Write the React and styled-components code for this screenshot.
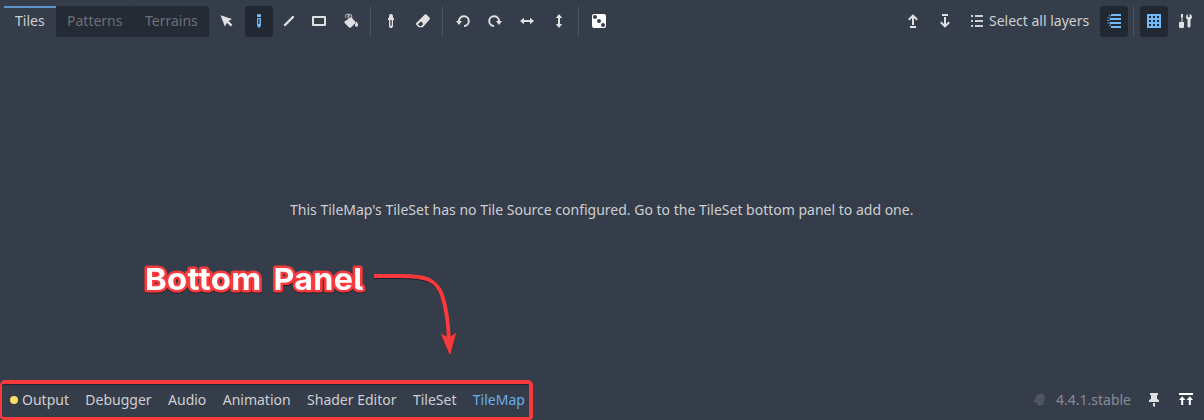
import React from "react";
import styled, { createGlobalStyle } from "styled-components";

const Global = createGlobalStyle`
  * { box-sizing: border-box; }
  body { margin: 0; background: #363d4a; }
`;

const Panel = styled.div`
  position: relative;
  display: flex;
  flex-direction: column;
  width: 1204px;
  height: 420px;
  overflow: hidden;
  background: #363d4a;
  color: #cdcfd2;
  font: 14px/20px "Noto Sans", sans-serif;
`;

const Toolbar = styled.header`
  display: flex;
  height: 31px;
  margin-top: 6px;
  padding: 0 4px;
`;

const Tabs = styled.nav`
  display: flex;
  width: 205px;
  margin-right: 4px;
`;

const Tab = styled.div`
  width: ${(p) => p.$width}px;
  padding: ${(p) => (p.$active ? 3 : 5)}px 0 0 11px;
  border-top: ${(p) => (p.$active ? "2px solid #5c92c9" : "0")};
  background: ${(p) => (p.$active ? "transparent" : "#252b34")};
  color: ${(p) => (p.$active ? "#cdcfd2" : "#6c7078")};
  border-radius: ${(p) => (p.$active ? "0" : "1px 2px 0 0")};
`;

const Group = styled.div`
  display: flex;
`;

const ToolButton = styled.button`
  display: flex;
  align-items: center;
  justify-content: center;
  width: 28px;
  height: 31px;
  margin-right: ${(p) => p.$gap ?? 4}px;
  padding: 0 0 1px;
  border: 0;
  border-radius: 3px;
  background: ${(p) => (p.$pressed ? "#222831" : "transparent")};
  color: ${(p) => (p.$pressed ? "#70bafa" : "#e0e0e0")};
`;

const Separator = styled.div`
  width: 1px;
  height: 31px;
  margin-right: 6px;
  background: #4a505c;
`;

const Spacer = styled.div`
  flex: 1;
`;

const LayerButton = styled.div`
  display: flex;
  align-items: center;
  gap: 4px;
  width: 131px;
  height: 30px;
  white-space: nowrap;
`;

const Message = styled.main`
  flex: 1;
  padding: 163px 0 0 290px;
  white-space: nowrap;
`;

const BottomBar = styled.footer`
  display: flex;
  align-items: center;
  height: 40px;
`;

const PanelTabs = styled.nav`
  display: flex;
  align-items: center;
  gap: 16.4px;
  width: 533px;
  height: 40px;
  padding: 0 0 2px 8px;
  border: 4px solid #f93a3c;
  border-left-width: 2px;
  border-bottom-width: 3px;
  border-radius: 5px 5px 4px 4px;
  box-shadow: inset 0 1px 1px #20242d;
`;

const PanelTab = styled.div`
  display: flex;
  align-items: center;
  gap: 4px;
  white-space: nowrap;
  color: ${(p) => (p.$active ? "#69aeed" : "#cdcfd2")};
`;

const Dot = styled.i`
  width: 8px;
  height: 8px;
  border-radius: 50%;
  background: #ffdd65;
`;

const Status = styled.div`
  display: flex;
  align-items: center;
  padding-right: 10px;
  color: #888c94;
`;

const Version = styled.span`
  width: 80px;
  margin: 0 10px 0 9px;
`;

const BarIcon = styled.span`
  display: flex;
  color: #e0e0e0;
  margin-right: ${(p) => p.$gap || 0}px;
`;

const Annotation = styled.svg`
  position: absolute;
  left: 130px;
  top: 250px;
  filter: drop-shadow(0 1px 0.5px #20242d);
`;

const CalloutText = styled.text`
  fill: #fff;
  stroke: #f93a3c;
  stroke-width: 5px;
  stroke-linejoin: round;
  paint-order: stroke fill;
  font: 700 30px Inter, sans-serif;
  font-feature-settings: "cv05" 1;
  letter-spacing: 0.3px;
`;

const shapes = {
  select: <path d="M1.5 2.2l4.4 11.2 2.1-3.6 3.7 3.6 1.7-1.6-3.8-3.7 3.4-2z" />,
  pencil: (
    <path fillRule="evenodd" d="M6 2a1 1 0 0 1 1-1h2a1 1 0 0 1 1 1v2H6zM6 5h4v7l-1 2.6H7L6 12zm1.2 1v5h1.3V6z" />
  ),
  line: <path d="M4 12l8-8" stroke="currentColor" strokeWidth="2.4" strokeLinecap="round" fill="none" />,
  rect: <path d="M2 4h12v8H2z" stroke="currentColor" strokeWidth="2" strokeLinejoin="round" fill="none" />,
  bucket: (
    <>
      <path d="M8 4L13 9.4 7.9 14.4Q7 15.2 6.1 14.4L1.6 10Q.9 9.2 1.6 8.4z" />
      <path d="M2.6 5V3a1.6 1.6 0 0 1 3.2-.4V6" stroke="currentColor" strokeWidth="1.3" fill="none" opacity=".55" />
      <path d="M5 4.5V3.3a1.8 1.8 0 0 1 3.6 0V6" stroke="currentColor" strokeWidth="1.3" fill="none" opacity=".65" />
      <path d="M13.5 8.5q1.7 2.4 1.5 3.7a1.5 1.5 0 0 1-3 0q0-1.1 1.5-3.7z" />
    </>
  ),
  picker: (
    <path fillRule="evenodd" d="M8 1q2 0 2 2v2h1v2h-1v6.2L9 15H7l-1-1.8V7H5V5h1V3q0-2 2-2zM7.3 7v5.7h1.4V7z" />
  ),
  eraser: (
    <path fillRule="evenodd" d="M9.8 1.5q.9-.7 1.7 0l3.1 3.3q.7.8 0 1.6L8.2 13.7q-.5.5-1.2.5H4.5q-.8 0-1.3-.5l-1.9-2q-.8-.8 0-1.6zM6 8.5l-2.7 2.2q-.5.5 0 1l1.3 1.2h1.9L8 11q-.1-2-2-2.5z" />
  ),
  undo: (
    <>
      <path d="M4 9V7.7a4.9 4.9 0 1 1 5 5.3" stroke="currentColor" strokeWidth="2" fill="none" />
      <path d="M1 8h6l-3 4z" />
    </>
  ),
  redo: (
    <>
      <path d="M12 9V7.7A4.9 4.9 0 1 0 7 13" stroke="currentColor" strokeWidth="2" fill="none" />
      <path d="M15 8H9l3 4z" />
    </>
  ),
  horizontal: (
    <>
      <path d="M4 8h8" stroke="currentColor" strokeWidth="2" />
      <path d="M5 4.7v6.6L1 8zM11 4.7v6.6L15 8z" />
    </>
  ),
  vertical: (
    <>
      <path d="M8 4v8" stroke="currentColor" strokeWidth="2" />
      <path d="M4.8 5h6.4L8 1zM4.8 11h6.4L8 15z" />
    </>
  ),
  dice: (
    <>
      <rect x="1" y="1" width="14" height="14" rx="2" fill="#fff" />
      <g fill="#363d4a"><circle cx="4" cy="4" r="2" /><circle cx="8" cy="8" r="2" /><circle cx="12" cy="12" r="2" /></g>
    </>
  ),
  layerUp: (
    <path d="M8 12V3M3.8 6.8L8 2.6l4.2 4.2M5 14h6" stroke="currentColor" strokeWidth="2" fill="none" />
  ),
  layerDown: (
    <path d="M8 4v9M3.8 9.2L8 13.4l4.2-4.2M5 2h6" stroke="currentColor" strokeWidth="2" fill="none" />
  ),
  list: <path d="M2 3h2M6 3h8M2 8h2M6 8h8M2 13h2M6 13h8" stroke="currentColor" strokeWidth="2" />,
  highlight: (
    <>
      <path d="M5 2h10M4 6h11M4 10h11M5 14h10" stroke="currentColor" strokeWidth="2" />
      <path d="M1 7.5h3M1.5 4.5l2.5 1M1.5 10.5l2.5-1M3 2l2 1.5M3 13l2-1.5" stroke="currentColor" strokeWidth="1.1" opacity=".65" />
    </>
  ),
  grid: (
    <path fillRule="evenodd" d="M1 1h14v14H1zM3 3v2h2V3zm4 0v2h2V3zm4 0v2h2V3zM3 7v2h2V7zm4 0v2h2V7zm4 0v2h2V7zM3 11v2h2v-2zm4 0v2h2v-2zm4 0v2h2v-2z" />
  ),
  tools: (
    <path d="M3 1h2v3l-.5 1v4H6v5q0 1-1 1H2q-1 0-1-1V9h2.5V5L3 4zM9.8 1v3h1.8V1Q14 1.4 14 4q0 1.6-1.5 2.4V13a1.5 1.5 0 0 1-3 0V6.4Q8 5.6 8 4q0-2.2 1.8-3z" />
  ),
  bell: (
    <path d="M10 1.3l1 .5q4 1.5 2.5 6l-1.3 4 .6 1.5-2.8-.7a1.8 1.8 0 0 1-3.4-1.3L1.5 9.8 3.5 8l1.2-3.2Q6.2 1.4 9 2z" />
  ),
  pin: <path d="M4 1h8v2h-1v4l2 1v2H3V8l2-1V3H4zM7 11h2v3l-1 1-1-1z" />,
  expand: (
    <path fill="#fff" d="M1 1h14v2H1zM4.2 4.3L7.4 8H5.2v5h-2V8H1zM11.8 4.3L15 8h-2.2v5h-2V8H8.6z" />
  ),
};

const Icon = ({ name, fill = "currentColor" }) => (
  <svg width="16" height="16" viewBox="0 0 16 16" fill={fill}>
    {shapes[name]}
  </svg>
);

const Tool = ({ name, ...props }) => (
  <ToolButton aria-label={name} {...props}><Icon name={name} /></ToolButton>
);

export default function App() {
  return (
    <Panel>
      <Global />
      <Toolbar>
        <Tabs>
          <Tab $active $width={52}>Tiles</Tab>
          <Tab $width={78}>Patterns</Tab>
          <Tab $width={75}>Terrains</Tab>
        </Tabs>
        <Group>
          <Tool name="select" />
          <Tool name="pencil" $pressed $gap={2} />
          <Tool name="line" $gap={2} />
          <Tool name="rect" />
          <Tool name="bucket" $gap={5} />
        </Group>
        <Separator />
        <Group>
          <Tool name="picker" />
          <Tool name="eraser" $gap={5} />
        </Group>
        <Separator />
        <Group>
          <Tool name="undo" />
          <Tool name="redo" />
          <Tool name="horizontal" />
          <Tool name="vertical" $gap={5} />
        </Group>
        <Separator />
        <Tool name="dice" $gap={0} />
        <Spacer />
        <Tool name="layerUp" />
        <Tool name="layerDown" $gap={10} />
        <LayerButton><Icon name="list" />Select all layers</LayerButton>
        <Tool name="highlight" $pressed $gap={5} />
        <Separator />
        <Tool name="grid" $pressed />
        <Tool name="tools" $gap={0} />
      </Toolbar>
      <Message>This TileMap's TileSet has no Tile Source configured. Go to the TileSet bottom panel to add one.</Message>
      <BottomBar>
        <PanelTabs>
          <PanelTab><Dot />Output</PanelTab>
          <PanelTab>Debugger</PanelTab>
          <PanelTab>Audio</PanelTab>
          <PanelTab>Animation</PanelTab>
          <PanelTab>Shader Editor</PanelTab>
          <PanelTab>TileSet</PanelTab>
          <PanelTab $active>TileMap</PanelTab>
        </PanelTabs>
        <Spacer />
        <Status>
          <Icon name="bell" fill="#50555f" />
          <Version>4.4.1.stable</Version>
          <BarIcon $gap={16}><Icon name="pin" /></BarIcon>
          <BarIcon><Icon name="expand" /></BarIcon>
        </Status>
      </BottomBar>
      <Annotation width="350" height="120" viewBox="0 0 350 120">
        <CalloutText x="15" y="40" textLength="116.5" lengthAdjust="spacingAndGlyphs">Bottom</CalloutText>
        <CalloutText x="143.5" y="40" textLength="90" lengthAdjust="spacingAndGlyphs">Panel</CalloutText>
        <path d="M244 26H271C295 26 306 29 312 45Q318 63 319 91" stroke="#f93a3c" strokeWidth="4" fill="none" />
        <path d="M311 84l8 4 7-5-6 22z" fill="#f93a3c" stroke="#f93a3c" strokeWidth="0.5" strokeLinejoin="round" />
      </Annotation>
    </Panel>
  );
}
